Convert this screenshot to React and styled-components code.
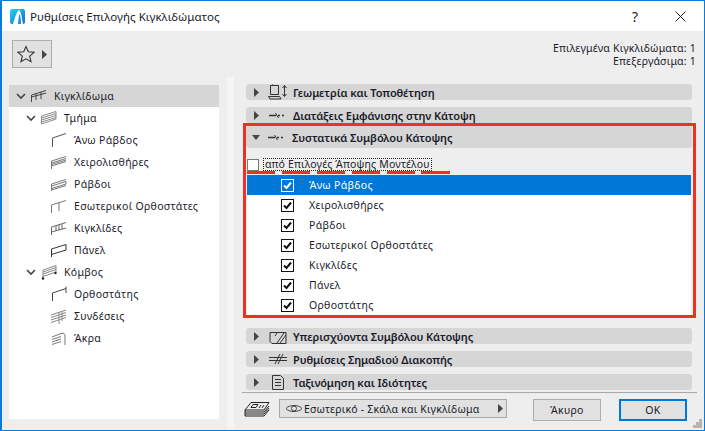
import styled, { createGlobalStyle } from 'styled-components';

const GlobalStyle = createGlobalStyle`
  html, body {
    margin: 0;
    padding: 0;
    overflow: hidden;
    background: #eeeeee;
  }
  * {
    box-sizing: border-box;
  }
`;

const Window = styled.div`
  position: relative;
  display: flex;
  flex-direction: column;
  width: 705px;
  height: 431px;
  border: 1px solid #0a7bd6;
  border-left-width: 2px;
  background: #eeeeee;
  color: #1a1a2a;
  font-family: "Noto Sans", "Open Sans", sans-serif;
  font-size: 10.5px;
`;

const TitleBar = styled.div`
  display: flex;
  align-items: center;
  flex: 0 0 30px;
  padding-left: 8px;
  background: #ffffff;
`;

const TitleText = styled.span`
  margin-left: 5px;
  font-size: 11.5px;
  letter-spacing: 0.05px;
`;

const TitleButtons = styled.div`
  display: flex;
  align-items: center;
  margin-left: auto;
  padding-right: 18px;
  gap: 37px;
`;

const HelpMark = styled.span`
  font-size: 14px;
`;

const TopRow = styled.div`
  display: flex;
  justify-content: space-between;
  flex: 0 0 46px;
  padding: 9px 8px 0 10px;
`;

const FavButton = styled.div`
  display: flex;
  align-items: center;
  justify-content: center;
  gap: 7px;
  width: 40px;
  height: 28px;
  border: 1px solid #adadad;
  background: #e1e1e1;
`;

const Status = styled.div`
  padding-top: 2px;
  text-align: right;
  letter-spacing: 0.2px;
`;

const StatusLine = styled.div`
  height: 13px;
  line-height: 13px;
`;

const Columns = styled.div`
  display: flex;
  flex: 1;
  min-height: 0;
`;

const TreeColumn = styled.div`
  flex: 0 0 225px;
  padding: 8px 8px 11px 7px;
`;

const Tree = styled.div`
  height: 100%;
  background: #ffffff;
`;

const TreeRow = styled.div`
  display: flex;
  align-items: center;
  height: 22px;
  padding-left: ${(p) => p.$indent}px;
  background: ${(p) => (p.$selected ? '#d6d6d6' : 'transparent')};
`;

const TreeChevron = styled.span`
  display: flex;
  flex: 0 0 10px;
  margin-right: 5px;
`;

const TreeLabel = styled.span`
  margin-left: 7px;
  letter-spacing: 0.3px;
`;

const Splitter = styled.div`
  flex: 0 0 7px;
  background: #f5f5f5;
`;

const PanelColumn = styled.div`
  display: flex;
  flex: 1;
  flex-direction: column;
  padding: 7px 8px 0 9px;
`;

const Header = styled.div`
  display: flex;
  align-items: center;
  height: ${(p) => p.$height || 16}px;
  margin: ${(p) => p.$margin || '0 4px 7px 3px'};
  padding-left: ${(p) => (p.$open ? 6 : 8)}px;
  border-radius: 3px;
  background: #d6d6d6;
  font-size: 11px;
  font-weight: 600;
  letter-spacing: -0.1px;
`;

const HeaderIcon = styled.span`
  display: flex;
  align-items: center;
  justify-content: center;
  width: 20px;
  margin-left: ${(p) => (p.$open ? 7 : 9)}px;
  margin-right: 5px;
`;

const Highlight = styled.div`
  height: 195px;
  margin-bottom: 10px;
  border: 3px solid #ee3124;
`;

const OptionRow = styled.div`
  display: flex;
  align-items: center;
  height: 13px;
  margin: 10px 0 0 1px;
`;

const EmptyBox = styled.span`
  flex: 0 0 12px;
  height: 12px;
  border: 1px solid #7a7a7a;
  background: #ffffff;
`;

const OptionLabel = styled.span`
  margin-left: 4px;
  padding: 0 1px;
  border: 1px dotted #222222;
  line-height: 11px;
  letter-spacing: 0.18px;
`;

const DashLine = styled.div`
  width: 203px;
  height: 3px;
  margin-left: 1px;
  background: repeating-linear-gradient(90deg, #ee3124 0 28px, transparent 28px 34.9px);
`;

const List = styled.div`
  margin: 1px 2px 0 1px;
  background: #ffffff;
`;

const ListRow = styled.div`
  display: flex;
  align-items: center;
  height: 20px;
  padding-left: 34px;
  background: ${(p) => (p.$active ? '#0078d7' : '#ffffff')};
  color: ${(p) => (p.$active ? '#ffffff' : 'inherit')};
`;

const ListLabel = styled.span`
  margin-left: 15px;
  letter-spacing: 0.3px;
`;

const Separator = styled.div`
  height: 1px;
  margin: -5px -1px 0 -1px;
  background: #a8a8a8;
`;

const Footer = styled.div`
  display: flex;
  align-items: flex-start;
  padding: 6px 0 0 1px;
`;

const LayerIcon = styled.span`
  display: flex;
  flex: 0 0 26px;
  margin-top: 3px;
`;

const Dropdown = styled.div`
  display: flex;
  align-items: center;
  flex: 0 0 228px;
  height: 19px;
  margin-left: 9px;
  padding: 0 3px 0 5px;
  border: 1px solid #a8a8a8;
  background: #e1e1e1;
`;

const DropdownText = styled.span`
  flex: 1;
  margin-left: 1px;
  letter-spacing: 0.2px;
`;

const FooterButton = styled.div`
  display: flex;
  align-items: center;
  justify-content: center;
  width: 68px;
  height: 22px;
  margin-left: ${(p) => p.$gap}px;
  border: ${(p) => (p.$primary ? '2px solid #0078d7' : '1px solid #adadad')};
  background: #e1e1e1;
  letter-spacing: 0.3px;
`;

const Grip = styled.svg`
  position: absolute;
  right: 2px;
  bottom: 2px;
`;

const Line = ({ d, w = 16, h = 16, color = '#555555', children }) => (
  <svg width={w} height={h} viewBox={`0 0 ${w} ${h}`} fill="none" stroke={color} strokeWidth="1">
    <path d={d} />
    {children}
  </svg>
);

const Chevron = () => (
  <svg width="10" height="8" viewBox="0 0 10 8" fill="none" stroke="#444444" strokeWidth="1.6">
    <path d="M1 2l4 4 4-4" />
  </svg>
);

const Arrow = ({ color = '#444444' }) => (
  <svg width="5" height="9" viewBox="0 0 5 9" fill={color}>
    <path d="M0 0l5 4.5L0 9z" />
  </svg>
);

const ArrowDown = () => (
  <svg width="8" height="5" viewBox="0 0 8 5" fill="#444444">
    <path d="M0 0h8L4 5z" />
  </svg>
);

const Check = ({ light }) => (
  <svg width="13" height="13" viewBox="0 0 13 13">
    <rect x="0.5" y="0.5" width="12" height="12" fill={light ? 'none' : '#ffffff'} stroke={light ? '#ffffff' : '#111111'} />
    <path d="M3 6.5l2.5 2.5L10 3.5" fill="none" stroke={light ? '#ffffff' : '#111111'} strokeWidth="2" />
  </svg>
);

const treeIcons = {
  railing: { d: 'M.5 14V7L15 2.5M.5 7v2L15 5M5 5.5V12M10 4v7', color: '#444444' },
  segment: { d: 'M.5 14V6L15 1.5V9zM.5 8L15 3.5M.5 10L15 5.5M.5 12L15 7.5', color: '#8a8a8a' },
  top: { d: 'M1.5 15V6L15 1.5', color: '#555555' },
  hand: { d: 'M.5 15V7L15 2.5M.5 9L15 4.5M.5 10.5L15 6M.5 12L15 7.5', color: '#777777' },
  rail: { d: 'M.5 15V8L15 3.5M.5 10L15 5.5V8L.5 12.5M.5 14L15 9.5', color: '#777777' },
  inner: { d: 'M.5 15V7L15 2.5M8 4.5V13', color: '#777777' },
  baluster: { d: 'M.5 15V7L15 2.5M.5 12L15 8M5 6V11M8 5V10M11 4V9', color: '#666666' },
  panel: { d: 'M.5 15V7L15 2.5V8L.5 12.5z', color: '#333333' },
  node: { d: 'M2 14V6L15 1.5V8L2 12.5zM2 8L15 3.5M2 10L15 5.5', color: '#8a8a8a', dots: true },
  post: { d: 'M1.5 15V7L15 2.5M15 .5V7', color: '#444444' },
  conn: { d: 'M0 7L15 2M0 9.5L15 4.5M0 12L15 7M0 14.5L15 9.5M8 4V16M11 3V13', color: '#888888' },
  end: { d: 'M1 7L10 3.5C13 2.5 14 4 14 6V15M1 9.5L10 6.5M1 12L10 9M1 14.5L10 11.5', color: '#777777' },
};

const tree = [
  { label: 'Κιγκλίδωμα', icon: 'railing', indent: 7, selected: true, chevron: true },
  { label: 'Τμήμα', icon: 'segment', indent: 17, chevron: true },
  { label: 'Άνω Ράβδος', icon: 'top', indent: 42 },
  { label: 'Χειρολισθήρες', icon: 'hand', indent: 42 },
  { label: 'Ράβδοι', icon: 'rail', indent: 42 },
  { label: 'Εσωτερικοί Ορθοστάτες', icon: 'inner', indent: 42 },
  { label: 'Κιγκλίδες', icon: 'baluster', indent: 42 },
  { label: 'Πάνελ', icon: 'panel', indent: 42 },
  { label: 'Κόμβος', icon: 'node', indent: 17, chevron: true },
  { label: 'Ορθοστάτης', icon: 'post', indent: 42 },
  { label: 'Συνδέσεις', icon: 'conn', indent: 42 },
  { label: 'Άκρα', icon: 'end', indent: 42 },
];

const components = ['Άνω Ράβδος', 'Χειρολισθήρες', 'Ράβδοι', 'Εσωτερικοί Ορθοστάτες', 'Κιγκλίδες', 'Πάνελ', 'Ορθοστάτης'];

const dark = '#333333';

// the small wall-with-break symbol used by the two plan display headers
const PlanSymbol = () => (
  <svg width="18" height="11" viewBox="0 0 18 11" fill="none" stroke={dark} strokeWidth="1.6">
    <path d="M0 5.5H7M9 5.5H11M13 5.5H15" />
    <path d="M6.5 3L9.5 8" strokeWidth="1" />
  </svg>
);

const AppLogo = () => (
  <svg width="15" height="15" viewBox="0 0 15 15">
    <defs>
      <linearGradient id="logo" x1="0" y1="0" x2="1" y2="1">
        <stop offset="0" stopColor="#27d3ee" />
        <stop offset="1" stopColor="#0a6fd0" />
      </linearGradient>
    </defs>
    <rect width="15" height="15" rx="2" fill="url(#logo)" />
    <path d="M3 15C5 8 7 2 9 1c2 1 3 8 4 14z" fill="#ffffff" />
    <path d="M8 15C8.5 9 9 6 9.5 5c1 2 1.5 6 1.5 10z" fill="#1f8fe0" />
  </svg>
);

const Star = () => (
  <svg width="18" height="18" viewBox="0 0 18 18" fill="none" stroke="#333333" strokeWidth="1.1">
    <path d="M9 1.5l2.3 5.2 5.7.6-4.3 3.8 1.3 5.6L9 13.8l-5 2.9 1.3-5.6L1 7.3l5.7-.6z" />
  </svg>
);

const Eye = () => (
  <svg width="18" height="11" viewBox="0 0 18 11" fill="none" stroke="#444444">
    <path d="M1 5.5C4 1.5 14 1.5 17 5.5 14 9.5 4 9.5 1 5.5z" />
    <circle cx="9" cy="5.5" r="2.5" />
  </svg>
);

const App = () => (
  <>
    <GlobalStyle />
    <Window>
      <TitleBar>
        <AppLogo />
        <TitleText>Ρυθμίσεις Επιλογής Κιγκλιδώματος</TitleText>
        <TitleButtons>
          <HelpMark>?</HelpMark>
          <Line w={11} h={11} color="#222222" d="M.5 .5l10 10M10.5 .5l-10 10" />
        </TitleButtons>
      </TitleBar>

      <TopRow>
        <FavButton>
          <Star />
          <Arrow />
        </FavButton>
        <Status>
          <StatusLine>Επιλεγμένα Κιγκλιδώματα: 1</StatusLine>
          <StatusLine>Επεξεργάσιμα: 1</StatusLine>
        </Status>
      </TopRow>

      <Columns>
        <TreeColumn>
          <Tree>
            {tree.map((item) => (
              <TreeRow key={item.label} $indent={item.indent} $selected={item.selected}>
                {item.chevron && (
                  <TreeChevron>
                    <Chevron />
                  </TreeChevron>
                )}
                <Line d={treeIcons[item.icon].d} color={treeIcons[item.icon].color}>
                  {treeIcons[item.icon].dots && (
                    <>
                      <circle cx="2" cy="14.5" r="1.2" fill="#222222" stroke="none" />
                      <circle cx="14.5" cy="9" r="1.2" fill="#222222" stroke="none" />
                    </>
                  )}
                </Line>
                <TreeLabel>{item.label}</TreeLabel>
              </TreeRow>
            ))}
          </Tree>
        </TreeColumn>
        <Splitter />
        <PanelColumn>
          <Header>
            <Arrow />
            <HeaderIcon>
              <Line w={20} h={16} color={dark} d="M2.5 1.5h8v9h-8zM4.5 .5v1M.5 12.5h11l1.5 2.5H2zM16.5 2v10M14.5 4l2-2.5 2 2.5M14.5 10l2 2.5 2-2.5" />
            </HeaderIcon>
            Γεωμετρία και Τοποθέτηση
          </Header>
          <Header $margin="0 4px 0 3px">
            <Arrow />
            <HeaderIcon>
              <PlanSymbol />
            </HeaderIcon>
            Διατάξεις Εμφάνισης στην Κάτοψη
          </Header>
          <Highlight>
            <Header $open $height={22} $margin="0 1px 0 0">
              <ArrowDown />
              <HeaderIcon $open>
                <PlanSymbol />
              </HeaderIcon>
              Συστατικά Συμβόλου Κάτοψης
            </Header>
            <OptionRow>
              <EmptyBox />
              <OptionLabel>από Επιλογές Άποψης Μοντέλου</OptionLabel>
            </OptionRow>
            <DashLine />
            <List>
              {components.map((label, i) => (
                <ListRow key={label} $active={i === 0}>
                  <Check light={i === 0} />
                  <ListLabel>{label}</ListLabel>
                </ListRow>
              ))}
            </List>
          </Highlight>
          <Header>
            <Arrow />
            <HeaderIcon>
              <Line w={18} h={15} color={dark} d="M1 3.5h16v11H3L1 12.5zM8 14l7-10M11 14l6-8M6 7l2-3" />
            </HeaderIcon>
            Υπερισχύοντα Συμβόλου Κάτοψης
          </Header>
          <Header>
            <Arrow />
            <HeaderIcon>
              <Line w={18} h={12} color={dark} d="M0 4.5h18M0 7.5h18M6 11l5-10M9 11l5-10" />
            </HeaderIcon>
            Ρυθμίσεις Σημαδιού Διακοπής
          </Header>
          <Header>
            <Arrow />
            <HeaderIcon>
              <Line w={12} h={15} color={dark} d="M.5 .5h8l3 3v11H.5zM3 4.5h6M3 7.5h6M3 10.5h6" />
            </HeaderIcon>
            Ταξινόμηση και Ιδιότητες
          </Header>
          <Separator />
          <Footer>
            <LayerIcon>
              <Line w={26} h={15} color="#222222" d="M7 .5h18l-5 7.5H1zM9 2.5h5l-2 3H7zM17 3l-2 3M20 3l-2 3M1 8v2h19l5-6M1 10v2h19l5-6M1 12v2h19l5-6" />
            </LayerIcon>
            <Dropdown>
              <Eye />
              <DropdownText>Εσωτερικό - Σκάλα και Κιγκλίδωμα</DropdownText>
              <Arrow />
            </Dropdown>
            <FooterButton $gap={26}>Άκυρο</FooterButton>
            <FooterButton $gap={18} $primary>OK</FooterButton>
          </Footer>
        </PanelColumn>
      </Columns>
      <Grip width="9" height="9" viewBox="0 0 9 9" fill="#b5b5b5">
        <path d="M6 0h3v3H6zM3 3h3v3H3zM6 3h3v3H6zM0 6h3v3H0zM3 6h3v3H3zM6 6h3v3H6z" />
      </Grip>
    </Window>
  </>
);

export default App;
